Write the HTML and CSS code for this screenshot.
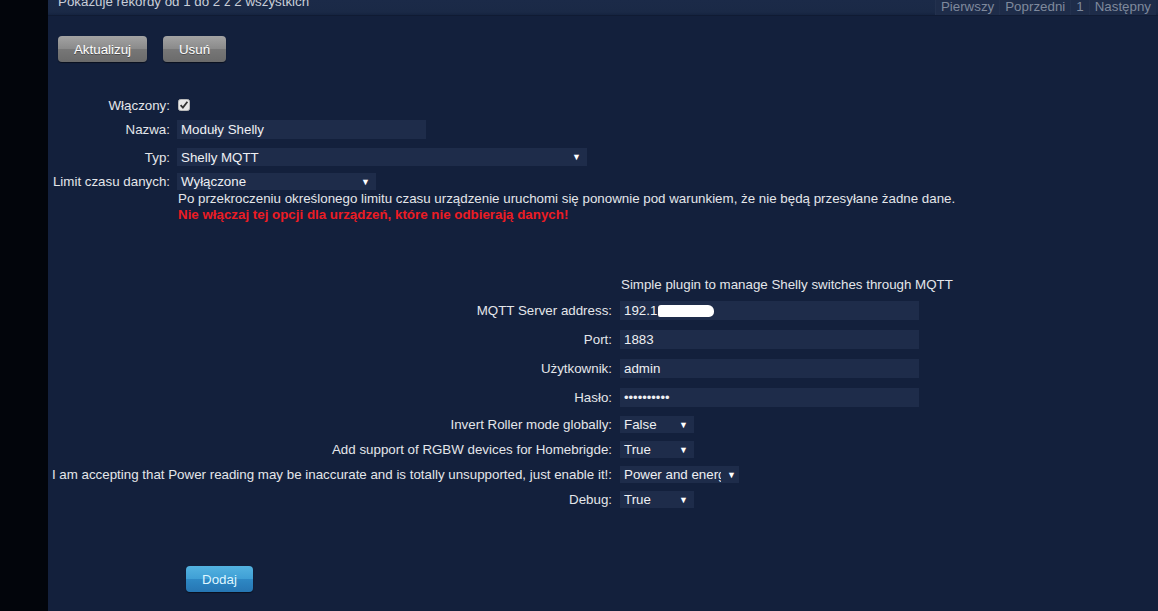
FILE: index.html
```html
<!DOCTYPE html>
<html lang="pl">
<head>
<meta charset="utf-8">
<title>Sprzęt</title>
<link rel="stylesheet" href="styles.css">
</head>
<body>
<div class="page">
  <div class="topbar">
    <span class="info">Pokazuje rekordy od 1 do 2 z 2 wszystkich</span>
    <div class="pager">
      <span class="pg">Pierwszy</span>
      <span class="pg">Poprzedni</span>
      <span class="pg">1</span>
      <span class="pg">Następny</span>
    </div>
  </div>

  <div class="actions">
    <button class="btn gray w-akt">Aktualizuj</button>
    <button class="btn gray w-usun">Usuń</button>
  </div>

  <div class="form1">
    <div class="row r-check">
      <label class="lbl">Włączony:</label>
      <span class="check"><svg width="12" height="12" viewBox="0 0 12 12"><rect x="0.5" y="0.5" width="11" height="11" rx="2" fill="#e8e8e8" stroke="#b8b8b8"/><path d="M2.6 6.2 L4.9 8.6 L9.4 2.8" fill="none" stroke="#333" stroke-width="1.8"/></svg></span>
    </div>
    <div class="row r-name">
      <label class="lbl">Nazwa:</label>
      <span class="field w-name">Moduły Shelly</span>
    </div>
    <div class="row r-typ">
      <label class="lbl">Typ:</label>
      <span class="field sel w-typ">Shelly MQTT<i class="arr">▼</i></span>
    </div>
    <div class="row r-lim">
      <label class="lbl">Limit czasu danych:</label>
      <span class="field sel w-lim">Wyłączone<i class="arr">▼</i></span>
    </div>
    <div class="desc">
      <p>Po przekroczeniu określonego limitu czasu urządzenie uruchomi się ponownie pod warunkiem, że nie będą przesyłane żadne dane.</p>
      <p class="warn">Nie włączaj tej opcji dla urządzeń, które nie odbierają danych!</p>
    </div>
  </div>

  <div class="form2">
    <div class="row2 r-title">
      <span class="lbl2"></span>
      <span class="title">Simple plugin to manage Shelly switches through MQTT</span>
    </div>
    <div class="row2 r-in first">
      <label class="lbl2">MQTT Server address:</label>
      <span class="field w-in">192.1<span class="blot"></span></span>
    </div>
    <div class="row2 r-in">
      <label class="lbl2">Port:</label>
      <span class="field w-in">1883</span>
    </div>
    <div class="row2 r-in">
      <label class="lbl2">Użytkownik:</label>
      <span class="field w-in">admin</span>
    </div>
    <div class="row2 r-in">
      <label class="lbl2">Hasło:</label>
      <span class="field w-in pwd">••••••••••</span>
    </div>
    <div class="row2 r-sel first-sel">
      <label class="lbl2">Invert Roller mode globally:</label>
      <span class="field sel w-s">False<i class="arr">▼</i></span>
    </div>
    <div class="row2 r-sel">
      <label class="lbl2">Add support of RGBW devices for Homebrigde:</label>
      <span class="field sel w-s">True<i class="arr">▼</i></span>
    </div>
    <div class="row2 r-sel">
      <label class="lbl2">I am accepting that Power reading may be inaccurate and is totally unsupported, just enable it!:</label>
      <span class="field sel w-sl"><span class="clip">Power and energy</span><i class="arr">▼</i></span>
    </div>
    <div class="row2 r-sel">
      <label class="lbl2">Debug:</label>
      <span class="field sel w-s">True<i class="arr">▼</i></span>
    </div>
  </div>

  <div class="bottom">
    <button class="btn blue">Dodaj</button>
  </div>
</div>
</body>
</html>
```

FILE: styles.css
```css
html, body {
  margin: 0;
  padding: 0;
  background: #02050b;
  height: 100%;
  overflow: hidden;
}
body {
  font-family: "Liberation Sans", Arial, sans-serif;
  font-size: 13.33px;
  color: #e4e6ea;
}
.page {
  margin-left: 48px;
  background: #13203c;
  height: 611px;
  position: relative;
}
.topbar {
  height: 15px;
  background: linear-gradient(#1b2a48, #1a2946 80%, #15233f);
  border-bottom: 1px solid #101b33;
  display: flex;
  justify-content: space-between;
  align-items: flex-end;
  overflow: hidden;
}
.info {
  margin-left: 10px;
  line-height: 13px;
  margin-bottom: 7px;
  color: #c9ced8;
  white-space: nowrap;
}
.pager {
  display: flex;
  margin-right: 2px;
  height: 15px;
  align-items: flex-end;
}
.pg {
  line-height: 13px;
  padding: 0 5px 7px;
  color: #7f899c;
  background: #1e2c49;
  border-left: 1px solid #27355299;
  height: 8px;
  white-space: nowrap;
}
.actions {
  display: flex;
  gap: 16px;
  margin: 20px 0 0 10px;
}
.btn {
  font-family: "Liberation Sans", Arial, sans-serif;
  font-size: 13.33px;
  height: 26px;
  border: none;
  border-radius: 4px;
  padding: 0;
  cursor: pointer;
}
.gray {
  background: linear-gradient(#a3a3a3, #8a8a8a 50%, #777 51%, #6b6b6b);
  color: #fff;
  box-shadow: 0 1px 1px rgba(0,0,0,0.5);
  text-shadow: 0 1px 0 rgba(0,0,0,0.35);
}
.w-akt { width: 89px; }
.w-usun { width: 63px; }

.form1 {
  margin-top: 35px;
}
.row {
  display: flex;
  align-items: center;
}
.lbl {
  width: 129px;
  text-align: right;
  padding-right: 7px;
  box-sizing: border-box;
  flex: none;
  white-space: nowrap;
}
.r-check { height: 16px; }
.check { display: flex; margin-left: 1px; }
.r-name { margin-top: 7px; height: 19px; }
.r-typ { margin-top: 9px; height: 18px; }
.r-lim { margin-top: 7px; height: 17px; }
.field {
  background: #1e2c4a;
  height: 100%;
  display: flex;
  align-items: center;
  padding-left: 4px;
  box-sizing: border-box;
  color: #eef0f3;
  white-space: nowrap;
}
.sel { position: relative; justify-content: space-between; }
.arr {
  font-style: normal;
  font-size: 9px;
  color: #fff;
  margin-right: 6px;
}
.w-name { width: 249px; }
.w-typ { width: 410px; }
.w-lim { width: 199px; }
.desc {
  margin-left: 130px;
  margin-top: 1px;
}
.desc p {
  margin: 0;
  line-height: 16px;
}
.warn {
  color: #ec1c24;
  font-weight: bold;
}

.form2 {
  margin-top: 53px;
}
.row2 {
  display: flex;
  align-items: center;
}
.lbl2 {
  width: 572px;
  text-align: right;
  padding-right: 8px;
  box-sizing: border-box;
  flex: none;
  white-space: nowrap;
}
.r-title { height: 16px; }
.title { padding-left: 1px; }
.r-in { height: 19px; margin-top: 10px; }
.r-in.first { margin-top: 9px; }
.w-in { width: 299px; }
.pwd { font-size: 13px; }
.blot {
  display: inline-block;
  width: 56px;
  height: 12px;
  background: #fff;
  border-radius: 3px 6px 5px 2px;
  margin-left: 1px;
}
.r-sel { height: 17px; margin-top: 8px; }
.r-sel.first-sel { margin-top: 9px; }
.w-s { width: 74px; }
.w-sl { width: 119px; }
.clip {
  width: 97px;
  overflow: hidden;
  white-space: nowrap;
  display: block;
}
.w-sl .arr { margin-right: 3px; }

.bottom {
  margin: 58px 0 0 138px;
}
.blue {
  width: 67px;
  background: linear-gradient(#53b2e0, #3f9fd5 50%, #2e88c4 51%, #2676b3);
  color: #dff6ff;
  box-shadow: 0 1px 1px rgba(0,0,0,0.5);
}
```
